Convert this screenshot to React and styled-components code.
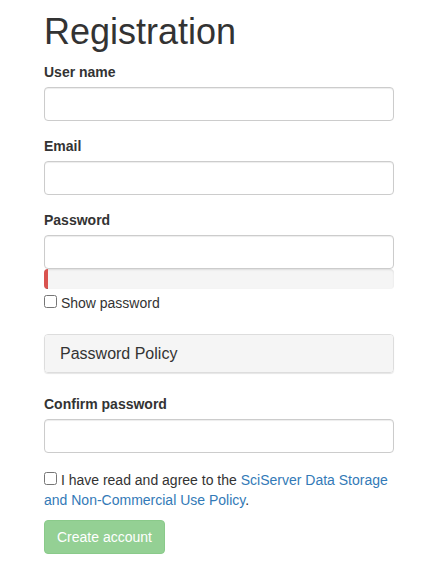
import React from "react";
import styled, { createGlobalStyle } from "styled-components";

const GlobalStyle = createGlobalStyle`
  html, body {
    margin: 0;
    padding: 0;
    background: #fff;
  }
  body {
    font-family: "Liberation Sans", Arial, Helvetica, sans-serif;
    font-size: 14px;
    line-height: 1.42857143;
    color: #333;
  }
  *, *::before, *::after { box-sizing: border-box; }
`;

const Container = styled.div`
  width: 350px;
  margin-left: 44px;
`;

const Title = styled.h1`
  font-size: 36px;
  font-weight: 500;
  line-height: 1.1;
  margin: 12px 0 10px;
  color: #333;
`;

const FormGroup = styled.div`
  margin-bottom: ${(p) => p.$mb || 15}px;
`;

const Label = styled.label`
  display: block;
  font-weight: bold;
  margin-bottom: 5px;
`;

const Input = styled.input`
  display: block;
  width: 100%;
  height: 34px;
  padding: 6px 12px;
  font-family: inherit;
  font-size: 14px;
  color: #555;
  background: #fff;
  border: 1px solid #ccc;
  border-radius: 4px;
  box-shadow: inset 0 1px 1px rgba(0, 0, 0, 0.075);
  outline: none;
`;

const Progress = styled.div`
  height: 20px;
  overflow: hidden;
  background: #f5f5f5;
  border-radius: 4px;
  box-shadow: inset 0 1px 2px rgba(0, 0, 0, 0.1);
`;

const ProgressBar = styled.div`
  height: 100%;
  background: #d9534f;
  box-shadow: inset 0 -1px 0 rgba(0, 0, 0, 0.15);
`;

const CheckLine = styled.label`
  display: block;
  font-weight: normal;
  line-height: 20px;
  margin: ${(p) => p.$margin || "0"};
`;

const Check = styled.input`
  margin: 0;
  width: 13px;
  height: 13px;
  vertical-align: baseline;
`;

const Panel = styled.div`
  margin-bottom: 21px;
  border: 1px solid #ddd;
  border-radius: 4px;
  box-shadow: 0 1px 1px rgba(0, 0, 0, 0.1);
  overflow: hidden;
`;

const PanelHeading = styled.div`
  padding: 10px 15px;
  background: #f5f5f5;
`;

const PanelTitle = styled.h3`
  margin: 0;
  font-size: 16px;
  font-weight: 500;
  line-height: 1.1;
  color: #333;
`;

const Link = styled.a`
  color: #337ab7;
  text-decoration: none;
`;

const Button = styled.button`
  display: inline-block;
  padding: 6px 12px;
  font-family: inherit;
  font-size: 14px;
  line-height: 1.42857143;
  color: #fff;
  background: #5cb85c;
  border: 1px solid #4cae4c;
  border-radius: 4px;
  opacity: 0.65;
  cursor: not-allowed;
  box-shadow: none;
`;

export default function App() {
  return (
    <>
      <GlobalStyle />
      <Container>
        <Title>Registration</Title>
        <FormGroup>
          <Label>User name</Label>
          <Input type="text" />
        </FormGroup>
        <FormGroup>
          <Label>Email</Label>
          <Input type="email" />
        </FormGroup>
        <FormGroup $mb={21}>
          <Label>Password</Label>
          <Input type="password" />
          <Progress>
            <ProgressBar style={{ width: "1%" }} />
          </Progress>
          <CheckLine $margin="4px 0 0">
            <Check type="checkbox" /> Show password
          </CheckLine>
        </FormGroup>
        <Panel>
          <PanelHeading>
            <PanelTitle>Password Policy</PanelTitle>
          </PanelHeading>
        </Panel>
        <FormGroup $mb={17}>
          <Label>Confirm password</Label>
          <Input type="password" />
        </FormGroup>
        <CheckLine $margin="0 0 10px">
          <Check type="checkbox" /> I have read and agree to the{" "}
          <Link href="#">SciServer Data Storage and Non-Commercial Use Policy</Link>.
        </CheckLine>
        <Button disabled>Create account</Button>
      </Container>
    </>
  );
}
